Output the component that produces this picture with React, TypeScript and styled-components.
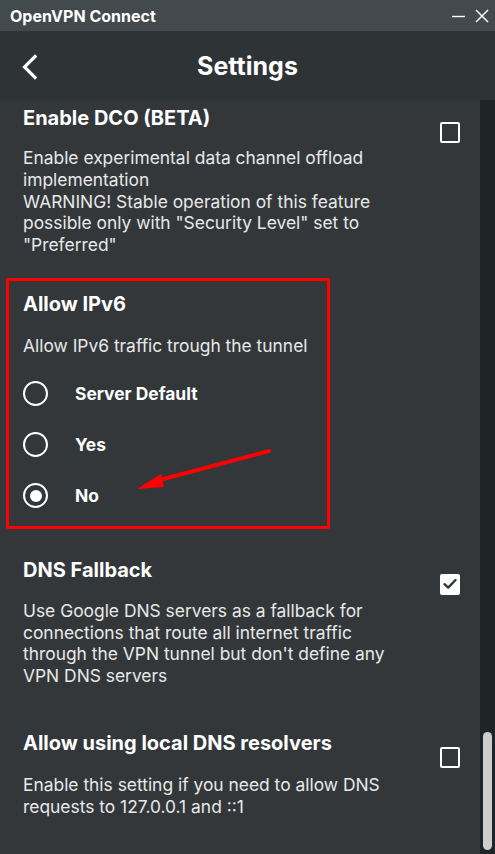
import React from "react";
import styled, { createGlobalStyle } from "styled-components";

const Global = createGlobalStyle`
  html, body { margin: 0; padding: 0; background: #33373a; }
  body { font-family: Inter, "Noto Sans", sans-serif; overflow: hidden; }
  * { box-sizing: border-box; }
`;

const Window = styled.div`
  width: 495px;
  height: 854px;
  display: flex;
  flex-direction: column;
  background: #33373a;
  overflow: hidden;
`;

const TitleBar = styled.div`
  height: 31px;
  flex: none;
  background: #424a4d;
  display: flex;
  align-items: center;
  padding: 0 6px 0 10px;
  color: #ffffff;
`;

const AppName = styled.div`
  flex: 1;
  font-size: 16px;
  font-weight: 700;
`;

const WinButtons = styled.div`
  display: flex;
  align-items: center;
  gap: 10px;
`;

const Header = styled.div`
  height: 69px;
  flex: none;
  background: #2e3336;
  display: grid;
  grid-template-columns: 60px 1fr 60px;
  align-items: center;
  color: #ffffff;
`;

const BackButton = styled.div`
  display: flex;
  align-items: center;
  padding-left: 21px;
  padding-top: 2px;
`;

const HeaderTitle = styled.h1`
  margin: 0;
  text-align: center;
  font-size: 25px;
  font-weight: 700;
`;

const Body = styled.div`
  flex: 1;
  display: flex;
  min-height: 0;
`;

const Scroller = styled.div`
  flex: 1;
  display: flex;
  flex-direction: column;
  padding-top: 6px;
`;

const Track = styled.div`
  width: 15px;
  flex: none;
  background: #1f2527;
  display: flex;
  flex-direction: column;
  justify-content: flex-end;
  align-items: center;
  padding-bottom: 4px;
`;

const Thumb = styled.div`
  width: 9px;
  height: 118px;
  border-radius: 5px;
  background: #cdcdcd;
`;

const Section = styled.section<{ $top?: number; $bottom?: number }>`
  position: relative;
  display: grid;
  grid-template-columns: 1fr 20px;
  column-gap: 16px;
  padding: ${(p) => p.$top ?? 18}px 20px ${(p) => p.$bottom ?? 18}px 23px;
`;

const TextCol = styled.div`
  display: flex;
  flex-direction: column;
`;

const Title = styled.div`
  font-size: 20px;
  font-weight: 700;
  line-height: 24px;
  color: #ffffff;
  white-space: nowrap;
`;

const Desc = styled.div<{ $gap?: number }>`
  margin-top: ${(p) => p.$gap ?? 18}px;
  font-size: 17.4px;
  line-height: 21.8px;
  color: #e8e8e8;
  white-space: nowrap;
`;

const Box = styled.div<{ $checked?: boolean }>`
  width: 20px;
  height: 21px;
  margin-top: 16px;
  border: 2px solid #ffffff;
  border-radius: 2px;
  background: ${(p) => (p.$checked ? "#ffffff" : "transparent")};
  display: flex;
  align-items: center;
  justify-content: center;
`;

const RadioList = styled.div`
  margin-top: 15px;
  display: flex;
  flex-direction: column;
  gap: 7px;
`;

const RadioRow = styled.div`
  height: 44px;
  display: flex;
  align-items: center;
`;

const RadioCircle = styled.div<{ $on?: boolean }>`
  width: 25px;
  height: 25px;
  border-radius: 50%;
  border: 2.5px solid #ffffff;
  display: flex;
  align-items: center;
  justify-content: center;
  &::after {
    content: "";
    display: ${(p) => (p.$on ? "block" : "none")};
    width: 12px;
    height: 12px;
    border-radius: 50%;
    background: #ffffff;
  }
`;

const RadioLabel = styled.span`
  margin-left: 27px;
  font-size: 17.4px;
  font-weight: 700;
  color: #ffffff;
`;

const Highlight = styled.div`
  position: absolute;
  left: 6px;
  top: 4px;
  width: 324px;
  height: 251px;
  border: 3px solid #ff0000;
  border-radius: 2px;
  pointer-events: none;
`;

const Arrow = styled.svg`
  position: absolute;
  left: 130px;
  top: 170px;
  pointer-events: none;
`;

function Check() {
  return (
    <svg width="14" height="12" viewBox="0 0 14 12">
      <path d="M1.5 6.2 L5.2 9.6 L12.5 2" fill="none" stroke="#33373a" strokeWidth="2.4" strokeLinecap="round" strokeLinejoin="round" />
    </svg>
  );
}

export default function App() {
  const options = ["Server Default", "Yes", "No"];
  return (
    <Window>
      <Global />
      <TitleBar>
        <AppName>OpenVPN Connect</AppName>
        <WinButtons>
          <svg width="14" height="14" viewBox="0 0 14 14">
            <path d="M1 7.5 H14" stroke="#ffffff" strokeWidth="1.4" />
          </svg>
          <svg width="14" height="14" viewBox="0 0 14 14">
            <path d="M1 1 L13 13 M13 1 L1 13" stroke="#ffffff" strokeWidth="1.5" />
          </svg>
        </WinButtons>
      </TitleBar>
      <Header>
        <BackButton>
          <svg width="18" height="26" viewBox="0 0 18 26">
            <path d="M14 2.5 L3.5 13 L14 23.5" fill="none" stroke="#ffffff" strokeWidth="3.2" strokeLinecap="square" />
          </svg>
        </BackButton>
        <HeaderTitle>Settings</HeaderTitle>
        <div />
      </Header>
      <Body>
        <Scroller>
          <Section $top={0} $bottom={18}>
            <TextCol>
              <Title>Enable DCO (BETA)</Title>
              <Desc $gap={17}>
                Enable experimental data channel offload
                <br />
                implementation
                <br />
                WARNING! Stable operation of this feature
                <br />
                possible only with "Security Level" set to
                <br />
                "Preferred"
              </Desc>
            </TextCol>
            <Box />
          </Section>
          <Section $top={18} $bottom={20}>
            <TextCol>
              <Title>Allow IPv6</Title>
              <Desc $gap={19}>Allow IPv6 traffic trough the tunnel</Desc>
              <RadioList>
                {options.map((o) => (
                  <RadioRow key={o}>
                    <RadioCircle $on={o === "No"} />
                    <RadioLabel>{o}</RadioLabel>
                  </RadioRow>
                ))}
              </RadioList>
            </TextCol>
            <div />
            <Highlight />
            <Arrow width="150" height="60" viewBox="0 0 150 60">
              <path d="M139 7 L22 38" stroke="#ff0000" strokeWidth="4" strokeLinecap="round" />
              <path d="M7 45 L31 30 L34 43 Z" fill="#ff0000" />
            </Arrow>
          </Section>
          <Section $top={20} $bottom={22}>
            <TextCol>
              <Title>DNS Fallback</Title>
              <Desc $gap={18}>
                Use Google DNS servers as a fallback for
                <br />
                connections that route all internet traffic
                <br />
                through the VPN tunnel but don't define any
                <br />
                VPN DNS servers
              </Desc>
            </TextCol>
            <Box $checked>
              <Check />
            </Box>
          </Section>
          <Section $top={22} $bottom={18}>
            <TextCol>
              <Title>Allow using local DNS resolvers</Title>
              <Desc $gap={19}>
                Enable this setting if you need to allow DNS
                <br />
                requests to 127.0.0.1 and ::1
              </Desc>
            </TextCol>
            <Box />
          </Section>
        </Scroller>
        <Track>
          <Thumb />
        </Track>
      </Body>
    </Window>
  );
}
